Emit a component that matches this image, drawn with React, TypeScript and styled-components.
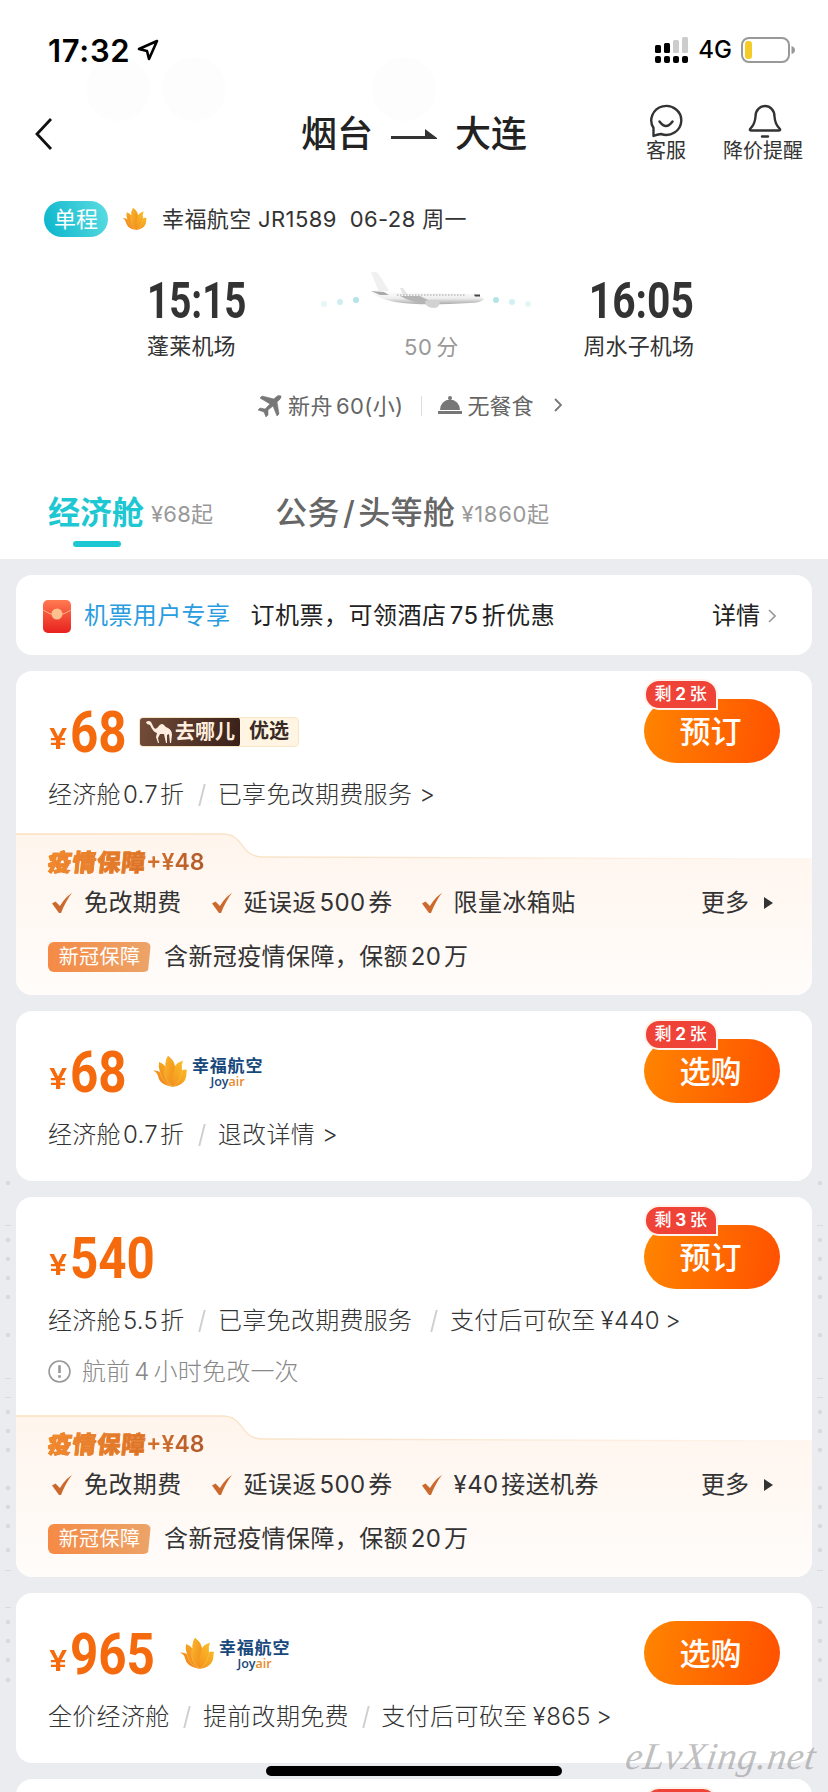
import React from 'react';
import styled, { createGlobalStyle } from 'styled-components';

const Global = createGlobalStyle`
  * { box-sizing: border-box; }
  body { margin: 0; background: #fff; }
`;

const cjk = `Inter, "Noto Sans CJK SC", sans-serif`;

const Page = styled.main`
  position: relative;
  width: 828px;
  height: 1792px;
  overflow: hidden;
  display: flex;
  flex-direction: column;
  background: #fff;
  color: #333;
  font-family: ${cjk};
`;

/* A line of text: $s size, $ls tracking, $ws word spacing, $w weight, $ml gap before it */
const T = styled.span<{ $s?: number; $ls?: number; $ws?: number; $w?: number; $c?: string; $ml?: number; $f?: string }>`
  display: block;
  white-space: pre;
  line-height: 1;
  font-family: ${p => p.$f ?? 'inherit'};
  font-size: ${p => p.$s ?? 24}px;
  letter-spacing: ${p => p.$ls ?? 0}px;
  word-spacing: ${p => p.$ws ?? 0}px;
  font-weight: ${p => p.$w ?? 'inherit'};
  color: ${p => p.$c ?? 'inherit'};
  margin-left: ${p => p.$ml ?? 0}px;
`;

const Bubble = styled.i<{ $x: number }>`
  position: absolute;
  left: ${p => p.$x}px;
  top: 57px;
  width: 64px;
  height: 64px;
  border-radius: 50%;
  background: #fdfdfd;
`;
const StatusBar = styled.div`
  position: relative;
  height: 92px;
  padding: 14px 33px 3px 48px;
  display: flex;
  align-items: center;
  color: #000;
`;
const StatusRight = styled.div`
  margin-left: auto;
  display: flex;
  align-items: center;
`;
const Header = styled.header`
  position: relative;
  height: 90px;
  padding: 0 25px 0 34px;
  display: grid;
  grid-template-columns: 267px 1fr auto auto;
  align-items: center;
`;
const Route = styled.h1`
  margin: 0;
  display: flex;
  align-items: center;
  gap: 18px;
  color: #222;
`;
const Action = styled.div<{ $mr?: number }>`
  display: flex;
  flex-direction: column;
  align-items: center;
  gap: 3px;
  height: 70px;
  padding-top: 5px;
  margin-right: ${p => p.$mr ?? 0}px;
`;
const FlightLine = styled.div`
  height: 76px;
  padding: 8px 0 0 44px;
  display: flex;
  align-items: center;
`;
const Pill = styled.span`
  width: 64px;
  height: 36px;
  border-radius: 18px;
  background: linear-gradient(70deg, #0ab4cb, #5cdde2);
  color: #fff;
  display: flex;
  align-items: center;
  justify-content: center;
  margin-right: 14px;
`;
const Times = styled.section`
  height: 108px;
  padding: 14px 134px 0 147px;
  display: grid;
  grid-template-columns: 150px 1fr 150px;
`;
const Stop = styled.div<{ $end?: boolean }>`
  display: flex;
  flex-direction: column;
  align-items: ${p => (p.$end ? 'flex-end' : 'flex-start')};
`;
const Clock = styled.span<{ $end?: boolean }>`
  height: 69px;
  padding-top: 10px;
  font: 700 50px/1 Roboto, sans-serif;
  transform: scaleX(${p => (p.$end ? 0.815 : 0.772)});
  transform-origin: ${p => (p.$end ? 'right' : 'left')};
  white-space: pre;
`;
const Middle = styled.div`
  display: flex;
  flex-direction: column;
  align-items: center;
  padding-left: 12px;
  color: #999;
`;
const Extras = styled.div`
  height: 80px;
  padding: 19px 0 0 258px;
  display: flex;
  align-items: center;
  color: #666;
`;
const Divider = styled.i`
  width: 1px;
  height: 20px;
  margin: 0 16px 0 18px;
  background: #ddd;
`;
const Tabs = styled.nav`
  flex: none;
  height: 123px;
  padding: 61px 0 0 48px;
  display: flex;
`;
const Tab = styled.div<{ $active?: boolean }>`
  position: relative;
  display: flex;
  align-items: flex-start;
  margin-right: 62px;
  height: 56px;
  color: ${p => (p.$active ? '#1ec8d2' : '#666')};
  &::after {
    content: '';
    display: ${p => (p.$active ? 'block' : 'none')};
    position: absolute;
    left: 25px;
    top: 44px;
    width: 48px;
    height: 6px;
    border-radius: 3px;
    background: #1ec8d2;
  }
`;
const From = styled(T)`
  margin-top: 6px;
  color: #999;
`;

const List = styled.section`
  position: relative;
  height: 1233px;
  padding: 16px 16px 0;
  background: #ebecf0;
  display: flex;
  flex-direction: column;
  gap: 16px;
`;
const EdgeMarks = styled.svg<{ $x: number }>`
  position: absolute;
  left: ${p => p.$x}px;
  top: 0;
`;
const Promo = styled.div`
  flex: none;
  height: 80px;
  border-radius: 16px;
  background: #fff;
  padding: 2px 36px 0 27px;
  display: flex;
  align-items: center;
  color: #222;
`;
const Card = styled.article<{ $h: number }>`
  position: relative;
  flex: none;
  height: ${p => p.$h}px;
  border-radius: 16px;
  background: #fff;
  display: flex;
  flex-direction: column;
  overflow: hidden;
`;
const Fare = styled.div`
  flex: none;
  height: 102px;
  padding: 28px 32px 0 33px;
  display: flex;
`;
const Price = styled.div`
  height: 62px;
  padding-top: 8px;
  display: flex;
  align-items: flex-end;
  color: #f56a0c;
`;
const Yen = styled.span`
  width: 21px;
  font: 600 29px/1 Inter, sans-serif;
  padding-bottom: 8px;
  transform: scaleX(1.12);
  transform-origin: left;
`;
const Amount = styled.span<{ $width: number }>`
  width: ${p => p.$width}px;
  font: 700 57px/1 Roboto, sans-serif;
  transform: scaleX(0.865);
  transform-origin: left;
  white-space: pre;
`;
const Buy = styled.button`
  position: relative;
  width: 136px;
  height: 64px;
  margin-left: auto;
  padding: 0 0 4px;
  border: 0;
  border-radius: 32px;
  background: linear-gradient(100deg, #ff8500, #ff5000);
  color: #fff;
  font: 500 31px/1 "Noto Sans CJK SC", sans-serif;
  text-indent: -3px;
`;
const Left = styled.span`
  position: absolute;
  left: 0;
  top: -20px;
  width: 74px;
  height: 31px;
  border: 2px solid #fff2ea;
  border-radius: 15px 15px 0 15px;
  background: #ef4337;
  font: 500 17px/26px ${cjk};
  letter-spacing: 0.6px;
  word-spacing: -2px;
  text-align: center;
  text-indent: 0;
  white-space: nowrap;
`;
const SoldTop = styled(Left)`
  left: 628px;
  top: 8px;
`;
const Terms = styled.div`
  flex: none;
  height: 44px;
  padding-left: 32px;
  display: flex;
  align-items: center;
  color: #333;
  font-weight: 300;
`;
const Slash = styled.span<{ $l: number; $r: number }>`
  width: 1.5px;
  height: 22px;
  margin: 0 ${p => p.$r}px 0 ${p => p.$l}px;
  background: #d0d0d0;
  transform: skewX(-14deg);
`;
const Note = styled.div`
  height: 57px;
  padding: 0 0 0 32px;
  display: flex;
  align-items: center;
  color: #888;
  font-weight: 300;
`;
const Shield = styled.section`
  position: relative;
  height: 162px;
  margin-top: auto;
  padding-left: 32px;
  & > svg { position: absolute; left: 0; top: 0; }
`;
const ShieldBody = styled.div`
  position: relative;
  display: flex;
  flex-direction: column;
`;
const ShieldTitle = styled.div`
  height: 50px;
  padding-top: 9px;
  display: flex;
  align-items: center;
`;
const Gradient = styled(T)<{ $from: string; $to: string; $slant?: boolean }>`
  padding: 3px 0;
  background: linear-gradient(90deg, ${p => p.$from}, ${p => p.$to});
  -webkit-background-clip: text;
  background-clip: text;
  color: transparent;
  -webkit-text-stroke: ${p => (p.$slant ? '0.7px #e88030' : '0')};
  transform: ${p => (p.$slant ? 'skewX(-6deg)' : 'none')};
`;
const Perks = styled.div`
  height: 40px;
  display: flex;
  align-items: center;
`;
const More = styled.div`
  margin-left: auto;
  margin-right: 39px;
  display: flex;
  align-items: center;
  gap: 15px;
`;
const Cover = styled.div`
  height: 68px;
  display: flex;
  align-items: center;
`;
const Tag = styled.span`
  width: 103px;
  height: 30px;
  margin-right: 13px;
  display: flex;
  align-items: center;
  justify-content: center;
  color: #fff;
  border-radius: 6px 6px 8px 6px;
  background: linear-gradient(90deg, #f58a45, #eca468);
  clip-path: polygon(0 0, 100% 0, 97% 100%, 0 100%);
`;
const Choice = styled.div`
  width: 160px;
  height: 30px;
  margin: 18px 0 0 13px;
  display: flex;
  border-radius: 4px;
  overflow: hidden;
  border: 1px solid #f8e5c8;
  background: #fff5e2;
`;
const Brand = styled.div`
  width: 101px;
  display: flex;
  align-items: center;
  padding-left: 7px;
  gap: 3px;
  margin: -1px 0 -1px -1px;
  border-radius: 4px;
  background: linear-gradient(100deg, #744d39, #38201a);
  color: #ffeedf;
`;
const Airline = styled.div<{ $ml: number }>`
  display: flex;
  margin: 17px 0 0 ${p => p.$ml}px;
  gap: 5px;
`;
const AirlineNames = styled.div`
  display: flex;
  flex-direction: column;
  align-items: center;
  padding-top: 2px;
  gap: 1px;
  color: #17487c;
`;
const HomeBar = styled.div`
  position: absolute;
  left: 266px;
  bottom: 16px;
  width: 296px;
  height: 10px;
  border-radius: 5px;
  background: #000;
`;
const Watermark = styled.div`
  position: absolute;
  left: 626px;
  top: 1737px;
  font: italic 400 38px/1 "Liberation Serif", serif;
  letter-spacing: 0.7px;
  color: rgba(150, 150, 150, 0.6);
  transform: skewX(-8deg);
`;

const Chevron = ({ w = 8, h = 14, sw = 1.6, c = '#777' }) => (
  <svg width={w} height={h} viewBox="0 0 8 14" fill="none" stroke={c} strokeWidth={sw}><path d="M1 1l6 6-6 6" /></svg>
);

const Lotus = ({ w, h }: { w: number; h: number }) => (
  <svg width={w} height={h} viewBox="0 0 34 31">
    <defs>
      <linearGradient id="petal" x1="0" x2="1" y1="1" y2="0"><stop stopColor="#ee7a1c" /><stop offset=".5" stopColor="#f6a320" /><stop offset="1" stopColor="#fbc92f" /></linearGradient>
      <linearGradient id="core" x1="0" x2="1" y1="0" y2="1"><stop stopColor="#fbb62a" /><stop offset="1" stopColor="#ef8a1c" /></linearGradient>
    </defs>
    <path d="M20 31C8 29 6 24 5 20Q4 16 0 14.500Q4 14 7 16Q5 11 6 6Q10 7 12.500 10.500Q12 5 15 0Q21 4 22 10Q25 6 30 4.500Q28 9 29 14.500Q31 13 34 14C33 18 34 20 32 24C29 29 24 30 20 31z" fill="url(#petal)" />
    <path d="M20 31C12 24 11 18 13 10Q12 5 15 0Q24 7 20.500 16Q18 23 20 31z" fill="url(#core)" />
    <path d="M20 31C11 24 11 18 12.500 10.500M20 31Q9 27 7 16M20 31Q28 25 29 14.500" fill="none" stroke="#fbc65a" strokeWidth=".5" />
  </svg>
);

const Check = ({ ml = 0 }) => (
  <svg width="20" height="20" viewBox="0 0 20 20" style={{ marginLeft: ml }}><path d="M0 10.500L3.500 8.500 8 13C11 8 14 4 20 0 16 5 12 12 9 20H7z" fill="#cb6a2e" /></svg>
);

const JoyAir = ({ ml }: { ml: number }) => (
  <Airline $ml={ml}>
    <Lotus w={34} h={31} />
    <AirlineNames>
      <T $s={17} $w={700} $ls={0.8}>幸福航空</T>
      <T $s={12.5} $w={600} $f={'"Open Sans", sans-serif'}>Joy<span style={{ color: '#e88a2c' }}>air</span></T>
    </AirlineNames>
  </Airline>
);

const Protection = ({ perk, ws }: { perk: string; ws?: number }) => (
  <Shield>
    <svg width="796" height="162" viewBox="0 0 796 162">
      <defs>
        <linearGradient id="warm" x2="0" y2="1"><stop stopColor="#fff5ed" /><stop offset="1" stopColor="#fffcfa" /></linearGradient>
        <linearGradient id="edge"><stop stopColor="#fae0bd" /><stop offset=".5" stopColor="#f9e5cf" /><stop offset="1" stopColor="#fff5ed" /></linearGradient>
      </defs>
      <path d="M0 1H206C230 1 222 24 248 24L796 26V162H0z" fill="url(#warm)" />
      <path d="M0 1H206C230 1 222 24 248 24L796 26" fill="none" stroke="url(#edge)" strokeWidth="1.3" />
    </svg>
    <ShieldBody>
      <ShieldTitle>
        <Gradient $from="#f58a28" $to="#d8722a" $slant $s={23.5} $w={900} $ls={1}>疫情保障</Gradient>
        <Gradient $from="#d8722a" $to="#b05a2b" $s={23} $w={600}>+¥48</Gradient>
      </ShieldTitle>
      <Perks>
        <Check ml={4} /><T $ml={12} $ls={0.4}>免改期费</T>
        <Check ml={30} /><T $ml={12} $ls={0.4} $ws={-4.5}>延误返 500 券</T>
        <Check ml={29} /><T $ml={12} $ls={0.4} $ws={ws}>{perk}</T>
        <More><T>更多</T><svg width="9" height="12"><path d="M0 0l9 6-9 6z" fill="#333" /></svg></More>
      </Perks>
      <Cover><Tag><T $s={20} $ls={0.4}>新冠保障</T></Tag><T $ls={0.4} $ws={-4.5}>含新冠疫情保障，保额 20 万</T></Cover>
    </ShieldBody>
  </Shield>
);

const BuyButton = ({ label, left }: { label: string; left?: number }) => (
  <Buy>{left && <Left>剩 <b>{left}</b> 张</Left>}{label}</Buy>
);

const dots = [624, 681, 700, 719, 738, 776, 853, 872, 891, 929, 948, 967, 991, 1063, 1082, 1101, 1121];
const dashes = [666, 819, 838, 1011, 1048];
const Marks = ({ x }: { x: number }) => (
  <EdgeMarks $x={x} width="8" height="1233" fill="#d9dade">
    {dots.map(y => <circle key={y} cx="4" cy={y} r="2.2" />)}
    {dashes.map(y => <rect key={y} x="1" y={y} width="6" height="1" />)}
  </EdgeMarks>
);

export default function App() {
  return (
    <Page>
      <Global />
      <Bubble $x={86} /><Bubble $x={162} /><Bubble $x={372} />
      <StatusBar>
        <T $s={31} $w={600} $ls={0.7}>17:32</T>
        <svg width="22" height="22" viewBox="0 0 22 22" style={{ marginLeft: 7 }} fill="none" stroke="#000" strokeWidth="2.6" strokeLinejoin="round"><path d="M20 2L2 10l8 2 2 8z" /></svg>
        <StatusRight>
          <svg width="34" height="27" viewBox="0 0 34 27">
            <g fill="#000">
              <rect x="0" y="8" width="6" height="8" rx="1.5" /><rect x="9" y="6" width="6" height="10" rx="1.5" />
              {[0, 9, 18, 27].map(x => <rect key={x} x={x} y="19" width="6" height="7" rx="2" />)}
            </g>
            <g fill="#ccc"><rect x="18" y="3" width="6" height="13" rx="1.5" /><rect x="27" y="0" width="6" height="16" rx="1.5" /></g>
          </svg>
          <T $s={24} $w={500} $ml={9}>4G</T>
          <svg width="54" height="26" viewBox="0 0 54 26" style={{ marginLeft: 9 }}>
            <rect x="1" y="1" width="47" height="24" rx="7" fill="none" stroke="#999" strokeWidth="2" />
            <rect x="4" y="4" width="7" height="18" rx="3" fill="#f5cc27" /><path d="M50.500 9q3.500 1 3.500 4t-3.500 4z" fill="#999" />
          </svg>
        </StatusRight>
      </StatusBar>
      <Header>
        <svg width="20" height="34" viewBox="0 0 20 34" fill="none" stroke="#111" strokeWidth="2.8"><path d="M17 2L3 17l14 15" /></svg>
        <Route>
          <T $s={36} $w={500}>烟台</T>
          <svg width="46" height="10" viewBox="0 0 46 10"><path d="M0 7H34V0L46 9V10H0z" fill="#333" /></svg>
          <T $s={36} $w={500}>大连</T>
        </Route>
        <Action $mr={37}>
          <svg width="34" height="34" viewBox="0 0 34 34" fill="none" stroke="#333" strokeWidth="2.4" strokeLinecap="round" strokeLinejoin="round"><path d="M4.500 32V24A15 14.500 0 1 1 12 30Q8 30.500 4.500 32zM10.500 17.500q6.500 9 13 0" /></svg>
          <T $s={20}>客服</T>
        </Action>
        <Action>
          <svg width="34" height="34" viewBox="0 0 34 34" fill="none" stroke="#333" strokeWidth="2.4" strokeLinecap="round" strokeLinejoin="round" style={{ marginLeft: 4 }}><path d="M3 26.500Q1 26.500 2.500 24.500Q7 20 7.500 12.500C7.500 6 12 2 17 2S26.500 6 26.500 12.500Q27 20 31.500 24.500Q33 26.500 31 26.500zM14 32.500h6" /></svg>
          <T $s={20}>降价提醒</T>
        </Action>
      </Header>
      <FlightLine>
        <Pill><T $s={22}>单程</T></Pill>
        <Lotus w={25} h={22} />
        <T $s={22} $ml={15} $ls={0.38}>幸福航空 JR1589  06-28 周一</T>
      </FlightLine>
      <Times>
        <Stop><Clock>15:15</Clock><T $s={22} $ls={0.2}>蓬莱机场</T></Stop>
        <Middle>
          <svg width="214" height="70" viewBox="0 1 214 70">
            <defs><linearGradient id="hull" x2="0" y2="1"><stop stopColor="#fff" /><stop offset=".55" stopColor="#eee" /><stop offset="1" stopColor="#aaa" /></linearGradient></defs>
            <path d="M51 7h5q3 1 13 19l2 4H60z" fill="#f0f0f0" />
            <path d="M51 27l12-1 90 3q8 1 11 5-3 4-14 4-50 3-75-1-16-3-24-10z" fill="url(#hull)" />
            <path d="M51 26l13 1 5 3-9 0z" fill="#aaa" />
            <path d="M80 31l20 0 12 6-2 2q-18-1-30-8z" fill="#b5b5b5" />
            <path d="M80 23l3 0 5 7-5 0z" fill="#e5e5e5" />
            <path d="M105 36q10-3 15 1-1 6-6 6-9 0-9-7z" fill="#d2d2d2" />
            <path d="M77 30h69" stroke="#bbb" strokeWidth="1.3" strokeDasharray="1.500 1.500" /><path d="M154 29.500l6 0 0 2h-5z" fill="#444" />
            <g fill="#b5e4e6"><circle cx="4" cy="39" r="3" opacity=".35" /><circle cx="20" cy="37" r="3" opacity=".65" /><circle cx="36" cy="35" r="3" /><circle cx="176" cy="35" r="3" /><circle cx="192" cy="37" r="3" opacity=".6" /><circle cx="208" cy="39" r="3" opacity=".35" /></g>
          </svg>
          <T $s={22} $ml={10} $ls={0.6} $ws={-3}>50 分</T>
        </Middle>
        <Stop $end><Clock $end>16:05</Clock><T $s={22} $ls={0.1}>周水子机场</T></Stop>
      </Times>
      <Extras>
        <svg width="24" height="22" viewBox="0 0 24 22" fill="#777"><path d="M23 1Q20-1 16 4L4 1 2 3 12 9 7 14 2 13 0 15 6 17 8 22 10 20 10 15 15 11 19 21 21 19 19 7Q24 3 23 1z" stroke="#777" strokeWidth=".6" /></svg>
        <T $s={22} $ml={6} $ls={0.4} $ws={-3.5}>新舟 60(小)</T>
        <Divider />
        <svg width="24" height="20" viewBox="0 0 24 20" fill="#777"><circle cx="12" cy="2" r="2" /><path d="M2 14a10 10.500 0 0 1 20 0zM0 15h24v3H0z" /></svg>
        <T $s={22} $ml={5}>无餐食</T>
        <span style={{ marginLeft: 21 }}><Chevron sw={1.8} /></span>
      </Extras>
      <Tabs>
        <Tab $active><T $s={32} $w={600}>经济舱</T><From $s={22} $ml={7} $ls={0.2}>¥68起</From></Tab>
        <Tab><T $s={32} $w={500} $ls={0.4}>公务<span style={{ margin: '0 3px' }}>/</span>头等舱</T><From $s={22} $ml={6} $ls={0.7}>¥1860起</From></Tab>
      </Tabs>
      <List>
        <Marks x={4} /><Marks x={816} />
        <Promo>
          <svg width="28" height="33" viewBox="0 0 28 33">
            <defs><linearGradient id="env" x2="0" y2="1"><stop stopColor="#ff7a50" /><stop offset="1" stopColor="#e8201f" /></linearGradient></defs>
            <rect width="28" height="33" rx="5" fill="url(#env)" /><path d="M0 10Q14 20 28 10" fill="none" stroke="#ffb08a" /><circle cx="14" cy="14" r="5.500" fill="#ffc08f" />
          </svg>
          <T $ml={13} $c="#2a9de0" $ls={0.4}>机票用户专享</T>
          <T $ml={20} $ls={0.5} $ws={-4}>订机票，可领酒店 75 折优惠</T>
          <T style={{ marginLeft: 'auto', marginRight: 8 }}>详情</T><Chevron c="#999" />
        </Promo>

        <Card $h={324}>
          <Fare>
            <Price><Yen>¥</Yen><Amount $width={56}>68</Amount></Price>
            <Choice>
              <Brand>
                <svg width="26" height="22" viewBox="0 0 26 22" fill="#ffeedf"><path d="M0 1Q3-1 5 1L8 7q2 2 4-1 3-5 6-2 2 3 4 3 4 2 4 7l-1 8h-1l-1-9-2 1 0 8h-1l-2-9-4 0-2 4 1 5h-1l-2-6 1-4Q7 11 4 4L1 3z" /></svg>
                <T $s={20} $w={700}>去哪儿</T>
              </Brand>
              <T $s={20} $w={700} $ml={9} $c="#382b25" style={{ lineHeight: '27px' }}>优选</T>
            </Choice>
            <BuyButton label="预订" left={2} />
          </Fare>
          <Terms><T $ls={0.3} $ws={-5}>经济舱 0.7 折</T><Slash $l={17} $r={15} /><T $ls={0.3}>已享免改期费服务 &gt;</T></Terms>
          <Protection perk="限量冰箱贴" />
        </Card>

        <Card $h={170}>
          <Fare>
            <Price><Yen>¥</Yen><Amount $width={56}>68</Amount></Price>
            <JoyAir ml={27} />
            <BuyButton label="选购" left={2} />
          </Fare>
          <Terms><T $ls={0.3} $ws={-5}>经济舱 0.7 折</T><Slash $l={17} $r={15} /><T $ls={0.3}>退改详情 &gt;</T></Terms>
        </Card>

        <Card $h={380}>
          <Fare>
            <Price><Yen>¥</Yen><Amount $width={84}>540</Amount></Price>
            <BuyButton label="预订" left={3} />
          </Fare>
          <Terms><T $ls={0.3} $ws={-5}>经济舱 5.5 折</T><Slash $l={17} $r={15} /><T $ls={0.3}>已享免改期费服务</T><Slash $l={21} $r={15} /><T $ls={0.3} $ws={-2}>支付后可砍至 ¥440 &gt;</T></Terms>
          <Note>
            <svg width="23" height="23" viewBox="0 0 22 22" fill="none" stroke="#999" strokeWidth="1.500"><circle cx="11" cy="11" r="10" /><path d="M11 5v7.500M11 14.500v2.500" strokeWidth="2.500" /></svg>
            <T $ml={11} $ls={0.2} $ws={-3}>航前 4 小时免改一次</T>
          </Note>
          <Protection perk="¥40 接送机券" ws={-4.5} />
        </Card>

        <Card $h={170}>
          <Fare>
            <Price><Yen>¥</Yen><Amount $width={83}>965</Amount></Price>
            <JoyAir ml={27} />
            <BuyButton label="选购" />
          </Fare>
          <Terms><T $ls={0.3}>全价经济舱</T><Slash $l={16} $r={16} /><T $ls={0.3}>提前改期免费</T><Slash $l={16} $r={15} /><T $ls={0.4} $ws={-2}>支付后可砍至 ¥865 &gt;</T></Terms>
        </Card>

        <Card $h={170}><SoldTop /></Card>
      </List>
      <HomeBar />
      <Watermark>eLvXing.net</Watermark>
    </Page>
  );
}
